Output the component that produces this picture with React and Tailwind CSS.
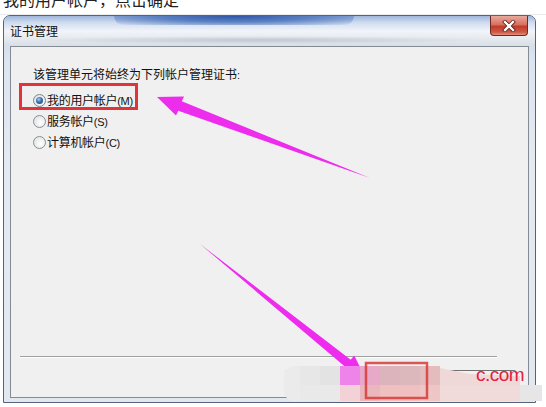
export default function App() {
  const lat = "font-['Liberation_Sans',sans-serif] text-[11px]";
  return (
    <div className="relative w-[546px] h-[407px] overflow-hidden bg-white text-black font-['Noto_Sans_CJK_SC','Noto_Sans',sans-serif]">
      {/* clipped caption text at top of page */}
      <div className="h-[15px] overflow-hidden border-b border-[#ececec]">
        <div className="mt-[-11px] pl-[3px] text-[16px] leading-[20px] text-[#222] whitespace-nowrap">
          我的用户帐户，点击确定
        </div>
      </div>

      {/* window */}
      <div className="relative ml-[3px] w-[533px] h-[388px] rounded-t-[7px] border border-[#56637a] bg-[linear-gradient(180deg,#c6d4e8_0%,#dde5f0_12%,#e4eaf1_40%,#e2e8ef_100%)] flex flex-col overflow-hidden">
        {/* title bar */}
        <div className="relative h-[30px] shrink-0 flex items-center pl-[6px] bg-[linear-gradient(180deg,#9fb6dc_0%,#cfdcef_22%,#f1f4f9_50%,#e6eaef_75%,#d7dee7_100%)]">
          <div className="absolute left-[110px] top-0 w-[240px] h-[9px] rounded-b-full bg-[radial-gradient(ellipse_at_50%_0%,#2d56a8_0%,#5a7fc2_45%,rgba(160,185,225,0)_100%)]" />
          <div className="absolute left-[20px] top-[20px] w-[470px] h-[8px] bg-[radial-gradient(ellipse_at_50%_50%,rgba(150,160,175,0.45)_0%,rgba(200,208,218,0)_70%)]" />
          <span className="relative text-[12px] leading-[14px] text-[#111]">证书管理</span>
          {/* close button */}
          <div className="absolute right-[7px] top-0 w-[38px] h-[20px] rounded-b-[4px] border border-t-0 border-[#6e2a22] bg-[linear-gradient(180deg,#e9aa9c_0%,#d8705f_45%,#c23a2c_55%,#cf5a45_85%,#e59080_100%)] flex items-center justify-center">
            <svg width="14" height="12" viewBox="0 0 14 12">
              <path d="M3 2 L11 10 M11 2 L3 10" stroke="#5a1a14" strokeWidth="4" strokeLinecap="square" />
              <path d="M3 2 L11 10 M11 2 L3 10" stroke="#ffffff" strokeWidth="2.4" strokeLinecap="square" />
            </svg>
          </div>
        </div>

        {/* client area */}
        <div className="relative mx-[6px] mb-[4px] flex-1 border border-[#858b93] bg-[#f0f0f0] flex flex-col">
          <div className="pt-[19px] pl-[22px] text-[12px] leading-[16px] text-[#111]">
            该管理单元将始终为下列帐户管理证书<span className={lat}>:</span>
          </div>
          <div className="mt-[7px] pl-[22px] flex flex-col text-[12px] text-[#111]">
            <div className="h-[21px] flex items-center gap-[1px]">
              <span className="w-[13px] h-[13px] rounded-full border border-[#7f8587] bg-[radial-gradient(circle_at_60%_60%,#ffffff_0%,#d9dcde_100%)] flex items-center justify-center">
                <span className="w-[7px] h-[7px] rounded-full bg-[radial-gradient(circle_at_40%_35%,#a8cdf2_0%,#3a6fb3_45%,#123c74_100%)]" />
              </span>
              <span className="leading-[14px] whitespace-nowrap tracking-[-0.3px]">我的用户帐户<span className={lat}>(M)</span></span>
            </div>
            <div className="h-[21px] flex items-center gap-[1px]">
              <span className="w-[13px] h-[13px] rounded-full border border-[#8a8f92] bg-[radial-gradient(circle_at_60%_60%,#ffffff_0%,#d9dcde_100%)]" />
              <span className="leading-[14px] whitespace-nowrap tracking-[-0.3px]">服务帐户<span className={lat}>(S)</span></span>
            </div>
            <div className="h-[21px] flex items-center gap-[1px]">
              <span className="w-[13px] h-[13px] rounded-full border border-[#8a8f92] bg-[radial-gradient(circle_at_60%_60%,#ffffff_0%,#d9dcde_100%)]" />
              <span className="leading-[14px] whitespace-nowrap tracking-[-0.3px]">计算机帐户<span className={lat}>(C)</span></span>
            </div>
          </div>

          {/* separator */}
          <div className="mt-[203px] ml-[9px] w-[477px] h-[2px] border-t border-[#a0a0a0] border-b border-b-white" />

          {/* buttons (labels hidden under the mosaic in the picture) */}
          <div className="mt-[12px] flex justify-end pr-[11px]">
            <div className="w-[72px] h-[23px] rounded-[3px] border border-[#707070] bg-[linear-gradient(180deg,#f2f2f2,#dcdcdc)]" />
            <div className="ml-[12px] w-[58px] h-[23px] rounded-[3px] border border-[#3c7fb1] bg-[linear-gradient(180deg,#f2f2f2,#dcdcdc)]" />
            <div className="ml-[20px] w-[70px] h-[23px] rounded-[3px] border border-[#707070] bg-[linear-gradient(180deg,#f2f2f2,#e6e6e6)]" />
          </div>
        </div>
      </div>

      {/* annotation: red box around first radio */}
      <div className="absolute left-[19px] top-[83px] w-[119px] h-[27px] border-[3px] border-[#e0343a]" />

      {/* arrows + mosaic */}
      <svg className="absolute inset-0 pointer-events-none" width="546" height="407" viewBox="0 0 546 407">
        <polygon points="157,97 184,96.5 181.8,101.3 370,178 178.2,110.7 176,115.5" fill="#ee2ced" />
        <polygon points="365,377 354.2,355.4 350.7,359.7 200,244 345.1,366.7 341.6,371" fill="#ee2ced" />

        {/* mosaic blocks */}
        <rect x="284" y="366" width="30" height="35" rx="10" fill="#ebebeb" />
        <rect x="300" y="366" width="20" height="19" fill="#e7e7e7" />
        <rect x="320" y="366" width="20" height="19" fill="#e3e3e3" />
        <rect x="340" y="366" width="20" height="19" fill="#ee84ea" />
        <rect x="360" y="366" width="20" height="19" fill="#e8a8c8" />
        <rect x="380" y="366" width="20" height="19" fill="#dcb4bc" />
        <rect x="400" y="366" width="20" height="19" fill="#dcb8bc" />
        <rect x="420" y="366" width="20" height="19" fill="#e4bcbe" />
        <polygon points="440,368 470,374 520,376 520,385 440,385" fill="#efd8d8" />
        <rect x="300" y="385" width="40" height="16" fill="#e9e9e9" />
        <rect x="340" y="385" width="20" height="16" fill="#f2d2d6" />
        <rect x="360" y="385" width="20" height="16" fill="#eab8bc" />
        <rect x="380" y="385" width="40" height="16" fill="#f0c0c0" />
        <rect x="420" y="385" width="20" height="16" fill="#eec6c6" />
        <rect x="440" y="385" width="80" height="16" fill="#f0dada" />
        <rect x="520" y="385" width="22" height="16" fill="#e6e6e6" />

        {/* red highlight on button */}
        <rect x="366" y="363" width="61" height="35" fill="none" stroke="#d63a3a" strokeWidth="2.5" strokeOpacity="0.85" />
      </svg>

      {/* watermark text */}
      <div className="absolute left-[476px] top-[364px] text-[19px] leading-[22px] text-[#e4203c] font-['Liberation_Sans',sans-serif] tracking-[-0.5px]">
        c.com
      </div>
    </div>
  );
}
